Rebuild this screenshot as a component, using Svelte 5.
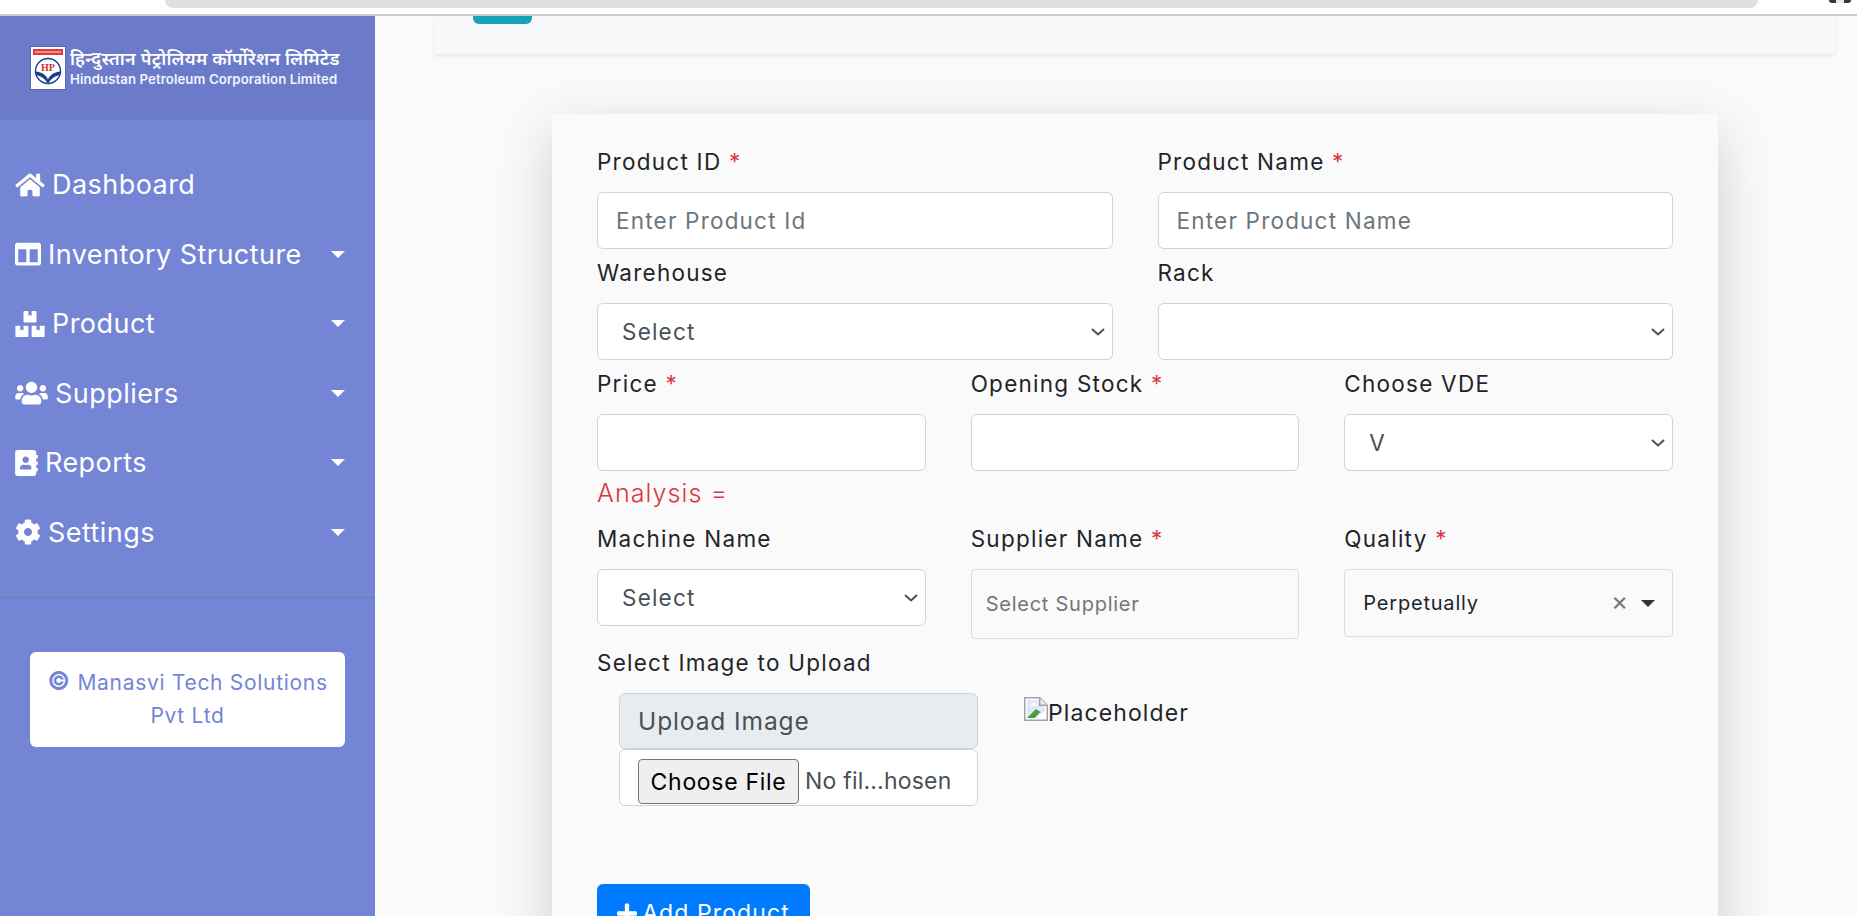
<script>
  const nav = [
    { label: 'Dashboard', vb: '0 0 576 512', w: 30, caret: false, d: 'M280.37 148.26L96 300.11V464a16 16 0 0 0 16 16l112.06-.29a16 16 0 0 0 15.92-16V368a16 16 0 0 1 16-16h64a16 16 0 0 1 16 16v95.64a16 16 0 0 0 16 16.05L464 480a16 16 0 0 0 16-16V300L295.67 148.26a12.19 12.19 0 0 0-15.3 0zM571.6 251.47L488 182.56V44.05a12 12 0 0 0-12-12h-56a12 12 0 0 0-12 12v72.61L318.47 43a48 48 0 0 0-61 0L4.34 251.47a12 12 0 0 0-1.6 16.9l25.5 31A12 12 0 0 0 45.15 301l235.22-193.74a12.19 12.19 0 0 1 15.3 0L530.9 301a12 12 0 0 0 16.9-1.6l25.5-31a12 12 0 0 0-1.7-16.93z' },
    { label: 'Inventory Structure', vb: '0 0 512 512', w: 26, caret: true, d: 'M464 32H48C21.49 32 0 53.49 0 80v352c0 26.51 21.49 48 48 48h416c26.51 0 48-21.49 48-48V80c0-26.51-21.49-48-48-48zM224 416H64V160h160v256zm224 0H288V160h160v256z' },
    { label: 'Product', vb: '0 0 576 512', w: 30, caret: true, d: 'M560 288h-80v96l-32-21.3-32 21.3v-96h-80c-8.8 0-16 7.2-16 16v192c0 8.8 7.2 16 16 16h224c8.8 0 16-7.2 16-16V304c0-8.8-7.2-16-16-16zm-384-64h224c8.8 0 16-7.2 16-16V16c0-8.8-7.2-16-16-16h-80v96l-32-21.3L256 96V0h-80c-8.8 0-16 7.2-16 16v192c0 8.8 7.2 16 16 16zm64 64h-80v96l-32-21.3L96 384v-96H16c-8.8 0-16 7.2-16 16v192c0 8.8 7.2 16 16 16h224c8.8 0 16-7.2 16-16V304c0-8.8-7.2-16-16-16z' },
    { label: 'Suppliers', vb: '0 0 640 512', w: 33, caret: true, d: 'M96 224c35.3 0 64-28.7 64-64s-28.7-64-64-64-64 28.7-64 64 28.7 64 64 64zm448 0c35.3 0 64-28.7 64-64s-28.7-64-64-64-64 28.7-64 64 28.7 64 64 64zm32 32h-64c-17.6 0-33.5 7.1-45.1 18.6 40.3 22.1 68.9 62 75.1 109.4h66c17.7 0 32-14.3 32-32v-32c0-35.3-28.7-64-64-64zm-256 0c61.9 0 112-50.1 112-112S381.9 32 320 32 208 82.1 208 144s50.1 112 112 112zm76.8 32h-8.3c-20.8 10-43.9 16-68.5 16s-47.6-6-68.5-16h-8.3C179.6 288 128 339.6 128 403.2V432c0 26.5 21.5 48 48 48h288c26.5 0 48-21.5 48-48v-28.8c0-63.6-51.6-115.2-115.2-115.2zm-223.7-13.4C161.5 263.1 145.6 256 128 256H64c-35.3 0-64 28.7-64 64v32c0 17.7 14.3 32 32 32h65.9c6.3-47.4 34.9-87.3 75.2-109.4z' },
    { label: 'Reports', vb: '0 0 448 512', w: 23, caret: true, d: 'M436 160c6.6 0 12-5.4 12-12v-40c0-6.6-5.4-12-12-12h-20V48c0-26.5-21.5-48-48-48H48C21.5 0 0 21.5 0 48v416c0 26.5 21.5 48 48 48h320c26.5 0 48-21.5 48-48v-48h20c6.6 0 12-5.4 12-12v-40c0-6.6-5.4-12-12-12h-20v-64h20c6.6 0 12-5.4 12-12v-40c0-6.6-5.4-12-12-12h-20v-64h20zm-228-32c35.3 0 64 28.7 64 64s-28.7 64-64 64-64-28.7-64-64 28.7-64 64-64zm112 236.8c0 10.6-10 19.2-22.4 19.2H118.4C106 384 96 375.4 96 364.8v-19.2c0-31.8 30.1-57.6 67.2-57.6h5c12.3 5.1 25.7 8 39.8 8s27.6-2.9 39.8-8h5c37.1 0 67.2 25.8 67.2 57.6v19.2z' },
    { label: 'Settings', vb: '0 0 512 512', w: 26, caret: true, d: 'M487.4 315.7l-42.6-24.6c4.3-23.2 4.3-47 0-70.2l42.6-24.6c4.9-2.8 7.1-8.6 5.5-14-11.1-35.6-30-67.8-54.7-94.6-3.8-4.1-10-5.1-14.8-2.3L380.8 110c-17.9-15.4-38.5-27.3-60.8-35.1V25.8c0-5.6-3.9-10.5-9.4-11.7-36.7-8.2-74.3-7.8-109.2 0-5.5 1.2-9.4 6.1-9.4 11.7V75c-22.2 7.9-42.8 19.8-60.8 35.1L88.7 85.5c-4.9-2.8-11-1.9-14.8 2.3-24.7 26.7-43.6 58.9-54.7 94.6-1.7 5.4.6 11.2 5.5 14L67.3 221c-4.3 23.2-4.3 47 0 70.2l-42.6 24.6c-4.9 2.8-7.1 8.6-5.5 14 11.1 35.6 30 67.8 54.7 94.6 3.8 4.1 10 5.1 14.8 2.3l42.6-24.6c17.9 15.4 38.5 27.3 60.8 35.1v49.2c0 5.6 3.9 10.5 9.4 11.7 36.7 8.2 74.3 7.8 109.2 0 5.5-1.2 9.4-6.1 9.4-11.7v-49.2c22.2-7.9 42.8-19.8 60.8-35.1l42.6 24.6c4.9 2.8 11 1.9 14.8-2.3 24.7-26.7 43.6-58.9 54.7-94.6 1.5-5.5-.7-11.3-5.6-14.1zM256 336c-44.1 0-80-35.9-80-80s35.9-80 80-80 80 35.9 80 80-35.9 80-80 80z' }
  ];
</script>

<div class="page">
  <div class="chrome">
    <div class="pill"></div>
    <div class="dot"></div>
  </div>
  <div class="shell">
    <aside class="sidebar">
      <div class="brand">
        <svg class="logo" viewBox="0 0 36 44">
          <rect x="0.5" y="0.5" width="35" height="43" fill="#fff" stroke="#5b69b0" />
          <rect x="3" y="3" width="30" height="6" fill="#e53935" />
          <rect x="5" y="5.4" width="26" height="1.2" fill="#f7c9c7" />
          <circle cx="18" cy="25" r="12.5" fill="#fff" stroke="#1d3f8b" stroke-width="1.4" />
          <text x="18" y="24.5" text-anchor="middle" class="hp">HP</text>
          <path d="M5.5 25.5c6 .5 10.500 3 12.500 8c2-5 6.500-7.500 12.500-8c-.5 2-1 3-1.500 4c-4 .5-8 3-11 8.500c-3-5.500-7-8-11-8.500c-.5-1-1-2-1.500-4z" fill="#1d3f8b" />
        </svg>
        <div class="brand-text">
          <div class="hi">हिन्दुस्तान पेट्रोलियम कॉर्पोरेशन लिमिटेड</div>
          <div class="en">Hindustan Petroleum Corporation Limited</div>
        </div>
      </div>
      <nav class="nav">
        {#each nav as item}
          <div class="nav-item">
            <svg class="nav-icon" viewBox={item.vb} width={item.w} height="26" fill="#fff"><path d={item.d} /></svg>
            <span class="nav-label">{item.label}</span>
            {#if item.caret}<span class="caret"></span>{/if}
          </div>
        {/each}
      </nav>
      <div class="rule"></div>
      <div class="credit">
        <span class="copy">©</span> Manasvi Tech Solutions<br />Pvt Ltd
      </div>
    </aside>

    <main class="main">
      <div class="topcard"><div class="teal"></div></div>
      <form class="form">
        <div class="grid two">
          <div class="field">
            <label for="pid">Product ID <b>*</b></label>
            <input id="pid" placeholder="Enter Product Id" />
          </div>
          <div class="field">
            <label for="pname">Product Name <b>*</b></label>
            <input id="pname" placeholder="Enter Product Name" />
          </div>
          <div class="field">
            <label for="wh">Warehouse</label>
            <select id="wh"><option>Select</option></select>
          </div>
          <div class="field">
            <label for="rack">Rack</label>
            <select id="rack"><option></option></select>
          </div>
        </div>
        <div class="grid three">
          <div class="field">
            <label for="price">Price <b>*</b></label>
            <input id="price" />
          </div>
          <div class="field">
            <label for="stock">Opening Stock <b>*</b></label>
            <input id="stock" />
          </div>
          <div class="field">
            <label for="vde">Choose VDE</label>
            <select id="vde"><option>V</option></select>
          </div>
        </div>
        <div class="analysis">Analysis =</div>
        <div class="grid three last">
          <div class="field">
            <label for="mach">Machine Name</label>
            <select id="mach"><option>Select</option></select>
          </div>
          <div class="field">
            <span class="lbl">Supplier Name <b>*</b></span>
            <div class="fake supplier">Select Supplier</div>
          </div>
          <div class="field">
            <span class="lbl">Quality <b>*</b></span>
            <div class="fake quality">
              <span class="qv">Perpetually</span>
              <span class="x">×</span>
              <span class="qcaret"></span>
            </div>
          </div>
        </div>
        <span class="lbl">Select Image to Upload</span>
        <div class="upload-row">
          <div class="upload">
            <div class="up-head">Upload Image</div>
            <div class="up-file">
              <span class="choose">Choose File</span>
              <span class="nofile">No fil...hosen</span>
            </div>
          </div>
          <div class="preview">
            <svg class="broken" viewBox="0 0 16 16" width="24" height="24">
              <path d="M.5.5h10l5 5v10H.5z" fill="#fff" stroke="#a3a3a3" />
              <path d="M10.5.5v5h5" fill="#eee" stroke="#a3a3a3" />
              <path d="M2 2h8v4h4v3L8 14H2z" fill="#dfe8fa" />
              <path d="M2 14l6-6 3 2-4 4z" fill="#4f9e3d" />
              <path d="M4 6l2.500-2.500L9 6z" fill="#fff" />
            </svg><span>Placeholder</span>
          </div>
        </div>
        <button type="button" class="add">
          <svg viewBox="0 0 448 512" width="20" height="23" fill="#fff"><path d="M416 208H272V64c0-17.67-14.33-32-32-32h-32c-17.67 0-32 14.33-32 32v144H32c-17.67 0-32 14.33-32 32v32c0 17.67 14.33 32 32 32h144v144c0 17.67 14.33 32 32 32h32c17.67 0 32-14.33 32-32V304h144c17.67 0 32-14.33 32-32v-32c0-17.67-14.33-32-32-32z" /></svg>
          <span>Add Product</span>
        </button>
      </form>
    </main>
  </div>
</div>

<style>
  :global(body) {
    margin: 0;
    background: #fafafa;
    overflow: hidden;
  }
  .page {
    width: 1857px;
    height: 916px;
    overflow: hidden;
    font-family: Inter, "Noto Sans", "Liberation Sans", sans-serif;
    color: #212529;
    display: flex;
    flex-direction: column;
  }
  .chrome {
    height: 14px;
    flex: none;
    background: #fff;
    border-bottom: 2px solid #cbcbcb;
    display: flex;
    justify-content: space-between;
  }
  .pill {
    margin-left: 165px;
    width: 1593px;
    height: 8px;
    background: #e0e0e0;
    border-radius: 0 0 14px 14px;
  }
  .dot {
    width: 22px;
    height: 3px;
    margin-right: 6px;
    background: linear-gradient(90deg, #33333f 0 32%, #e4e4f4 32% 68%, #33333f 68%);
    border-radius: 0 0 10px 10px;
  }
  .shell {
    flex: 1;
    display: flex;
    min-height: 0;
  }
  .sidebar {
    width: 375px;
    flex: none;
    background: #7485d6;
    color: #fff;
    display: flex;
    flex-direction: column;
  }
  .brand {
    height: 104px;
    flex: none;
    background: #6b7bc9;
    display: flex;
    align-items: flex-start;
    padding: 30px 0 0 30px;
    box-sizing: border-box;
    gap: 4px;
  }
  .logo {
    width: 36px;
    height: 44px;
    flex: none;
  }
  .hp {
    font: 700 10px "Liberation Serif", serif;
    fill: #d32f2f;
  }
  .brand-text {
    font-weight: 600;
    white-space: nowrap;
  }
  .hi {
    font-size: 17.9px;
    letter-spacing: 0.3px;
    line-height: 22px;
    margin-top: 2px;
  }
  .en {
    font-size: 13.2px;
    letter-spacing: 0.1px;
    line-height: 18px;
    font-weight: 600;
    color: #f2f4ff;
  }
  .nav {
    padding-top: 30px;
    display: flex;
    flex-direction: column;
  }
  .nav-item {
    height: 69.5px;
    display: flex;
    align-items: center;
    padding: 0 30px 0 15px;
    font-size: 27px;
    letter-spacing: 0.45px;
    gap: 7px;
  }
  .nav-label {
    flex: 1;
  }
  .nav-icon {
    flex: none;
  }
  .caret {
    width: 0;
    height: 0;
    border-left: 7px solid transparent;
    border-right: 7px solid transparent;
    border-top: 7px solid #fff;
  }
  .rule {
    margin-top: 30px;
    height: 1px;
    background: #5f8b8b;
  }
  .credit {
    margin: 54px 30px 0;
    height: 95px;
    box-sizing: border-box;
    background: #fff;
    border-radius: 6px;
    color: #7485d6;
    font-size: 21px;
    letter-spacing: 0.7px;
    line-height: 33px;
    text-align: center;
    padding-top: 14px;
  }
  .copy {
    font-weight: 700;
    font-size: 25px;
    line-height: 1;
  }
  .main {
    flex: 1;
    min-width: 0;
  }
  .topcard {
    margin: 0 22px 0 60px;
    height: 38px;
    background: #f8f9fa;
    box-shadow: 0 2px 4px rgba(0, 0, 0, 0.075);
  }
  .teal {
    margin-left: 38px;
    width: 59px;
    height: 8px;
    background: #17a2b8;
    border-radius: 0 0 6px 6px;
  }
  .form {
    margin: 60px 0 0 177px;
    width: 1166px;
    box-sizing: border-box;
    padding: 32px 45px 40px 45px;
    background: #fafafa;
    box-shadow: 0 18px 53px rgba(0, 0, 0, 0.175);
    height: 900px;
  }
  .grid {
    display: grid;
    column-gap: 45px;
  }
  .two {
    grid-template-columns: 1fr 1fr;
  }
  .three {
    grid-template-columns: 1fr 1fr 1fr;
  }
  .field {
    display: flex;
    flex-direction: column;
    margin-bottom: 8px;
    min-width: 0;
  }
  label,
  .lbl {
    display: block;
    box-sizing: border-box;
    font-size: 22.5px;
    letter-spacing: 1.25px;
    line-height: 30px;
    height: 30px;
    padding-top: 1px;
    margin-bottom: 16px;
    color: #212529;
    white-space: nowrap;
  }
  b {
    font-weight: 400;
    color: #dc3545;
  }
  input,
  select {
    box-sizing: border-box;
    height: 57px;
    width: 100%;
    font: inherit;
    font-size: 22.5px;
    letter-spacing: 1.2px;
    color: #495057;
    background-color: #fff;
    border: 1px solid #ced4da;
    border-radius: 6px;
    padding: 0 18px;
    outline: none;
  }
  select {
    padding-left: 24px;
    appearance: none;
    background-image: url("data:image/svg+xml,%3Csvg xmlns='http://www.w3.org/2000/svg' viewBox='0 0 14 8'%3E%3Cpath d='M1 1l6 5.500L13 1' fill='none' stroke='%23495057' stroke-width='2'/%3E%3C/svg%3E");
    background-repeat: no-repeat;
    background-position: right 7px center;
    background-size: 14px 8px;
  }
  input::placeholder {
    color: #6c757d;
  }
  .analysis {
    color: #dc3545;
    font-size: 25px;
    letter-spacing: 1.1px;
    font-weight: 300;
    line-height: 30px;
    height: 30px;
    box-sizing: border-box;
    margin: -1px 0 15px;
  }
  .last .field {
    margin-bottom: 0;
  }
  .last {
    height: 124px;
  }
  .fake {
    box-sizing: border-box;
    border: 1px solid #dcdcdc;
    border-radius: 4px;
    background: #fafafa;
    display: flex;
    align-items: center;
    font-size: 20px;
  }
  .supplier {
    height: 70px;
    padding-left: 14px;
    letter-spacing: 0.75px;
    color: #757575;
  }
  .quality {
    height: 68px;
    padding: 0 17px 0 18px;
    letter-spacing: 0.8px;
    color: #212529;
  }
  .qv {
    flex: 1;
  }
  .x {
    color: #777;
    font-size: 26px;
    line-height: 1;
    margin-right: 12px;
    position: relative;
    top: -2px;
  }
  .qcaret {
    width: 0;
    height: 0;
    border-left: 7.5px solid transparent;
    border-right: 7.5px solid transparent;
    border-top: 7px solid #333;
  }
  .upload-row {
    display: flex;
  }
  .upload {
    margin-left: 22px;
    width: 359px;
    flex: none;
  }
  .up-head {
    box-sizing: border-box;
    height: 56px;
    background: #e9ecef;
    border: 1px solid #ced4da;
    border-radius: 6px;
    color: #495057;
    font-size: 24.5px;
    letter-spacing: 0.9px;
    display: flex;
    align-items: center;
    padding-left: 18px;
  }
  .up-file {
    box-sizing: border-box;
    height: 57px;
    background: #fff;
    border: 1px solid #ced4da;
    border-radius: 6px;
    display: flex;
    align-items: flex-start;
    padding: 9px 0 0 18px;
    font-size: 23px;
  }
  .choose {
    box-sizing: border-box;
    width: 161px;
    height: 45px;
    background: #efefef;
    border: 1px solid #767676;
    border-radius: 4px;
    color: #000;
    letter-spacing: 0.7px;
    display: flex;
    align-items: center;
    justify-content: center;
    white-space: nowrap;
  }
  .nofile {
    margin-left: 6px;
    line-height: 45px;
    letter-spacing: 0.2px;
    color: #495057;
    white-space: nowrap;
  }
  .preview {
    margin: 4px 0 0 46px;
    display: flex;
    align-items: center;
    height: 32px;
    font-size: 23px;
    letter-spacing: 1.1px;
    color: #212529;
  }
  .broken {
    flex: none;
    align-self: flex-start;
  }
  .add {
    margin-top: 78px;
    width: 213px;
    height: 58px;
    background: #007bff;
    border: 0;
    border-radius: 6px;
    color: #fff;
    font: inherit;
    font-size: 23px;
    letter-spacing: 1.1px;
    display: flex;
    align-items: center;
    justify-content: center;
    gap: 5px;
  }
</style>
